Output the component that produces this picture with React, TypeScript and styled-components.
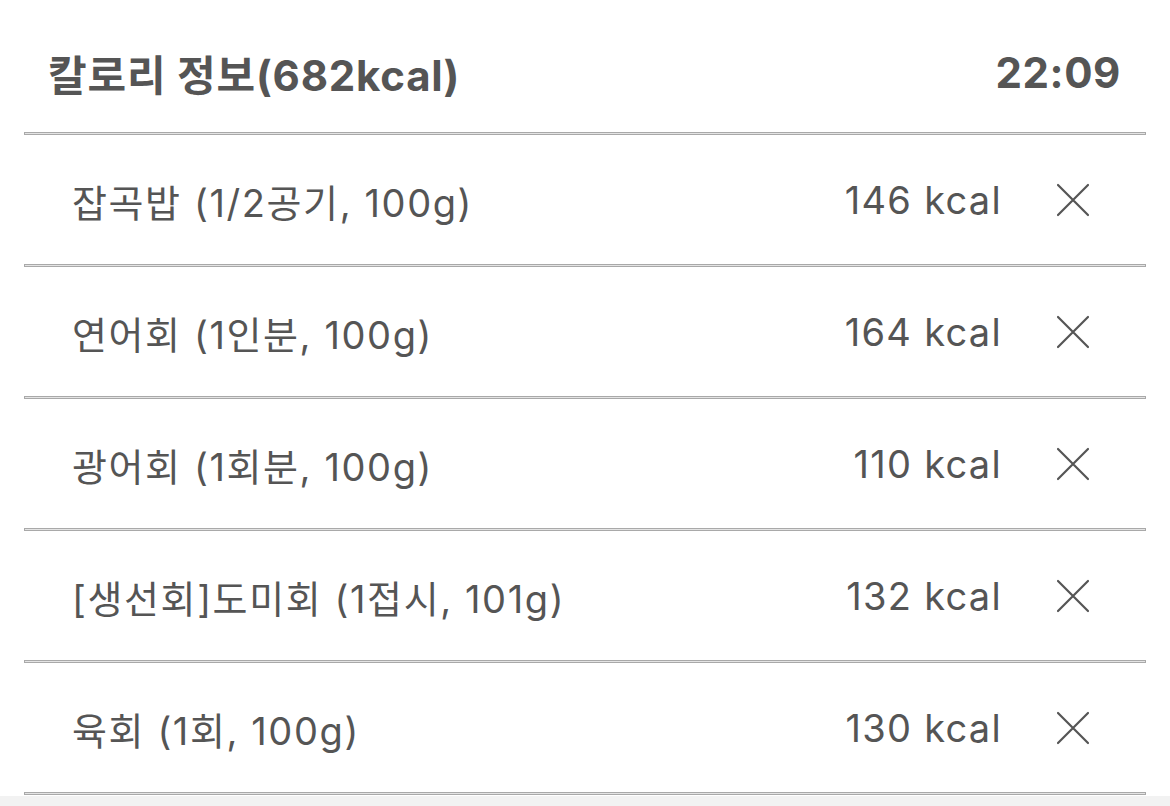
import React from "react";
import styled, { createGlobalStyle } from "styled-components";

const Global = createGlobalStyle`
  html, body { margin: 0; padding: 0; background: #f2f2f2; }
  body { font-family: Inter, "Noto Sans CJK KR", sans-serif; }
`;

const Page = styled.div`
  width: 1170px;
  background: #ffffff;
  padding-bottom: 1px;
`;

const Header = styled.header`
  height: 132px;
  display: flex;
  align-items: center;
  justify-content: space-between;
  padding: 12px 49px 0 48px;
  box-sizing: border-box;
`;

const Title = styled.h1`
  margin: 0;
  font-size: 42px;
  font-weight: 700;
  color: #555555;
  letter-spacing: 0.8px;
`;

const Time = styled.span`
  font-size: 42px;
  font-weight: 700;
  color: #555555;
  letter-spacing: 0.6px;
`;

const List = styled.ul`
  list-style: none;
  margin: 0;
  padding: 0 24px;
`;

const Divider = styled.div`
  height: 1px;
  border: 1px solid #a9a9a9;
  background: #e4e4e4;
`;

const Row = styled.li`
  height: 129px;
  display: flex;
  align-items: center;
  padding: 1px 56px 0 48px;
  box-sizing: border-box;
`;

const Name = styled.span`
  flex: 1;
  font-size: 38px;
  color: #555555;
  letter-spacing: 1.6px;
`;

const Kcal = styled.span`
  font-size: 38px;
  color: #555555;
  letter-spacing: 1.3px;
  margin-right: 54px;
`;

const CloseButton = styled.button`
  width: 34px;
  height: 34px;
  padding: 0;
  border: none;
  background: transparent;
  display: flex;
  align-items: center;
  justify-content: center;
  cursor: pointer;
`;

const items = [
  { name: "잡곡밥 (1/2공기, 100g)", kcal: 146 },
  { name: "연어회 (1인분, 100g)", kcal: 164 },
  { name: "광어회 (1회분, 100g)", kcal: 110 },
  { name: "[생선회]도미회 (1접시, 101g)", kcal: 132 },
  { name: "육회 (1회, 100g)", kcal: 130 },
];

const XIcon = () => (
  <svg width="34" height="34" viewBox="0 0 34 34">
    <path d="M2 2 L32 32 M32 2 L2 32" stroke="#555" strokeWidth="2.2" strokeLinecap="round" />
  </svg>
);

export default function App() {
  return (
    <Page>
      <Global />
      <Header>
        <Title>칼로리 정보(682kcal)</Title>
        <Time>22:09</Time>
      </Header>
      <List>
        <Divider />
        {items.map((it) => (
          <React.Fragment key={it.name}>
            <Row>
              <Name>{it.name}</Name>
              <Kcal>{it.kcal} kcal</Kcal>
              <CloseButton aria-label="삭제">
                <XIcon />
              </CloseButton>
            </Row>
            <Divider />
          </React.Fragment>
        ))}
      </List>
    </Page>
  );
}
